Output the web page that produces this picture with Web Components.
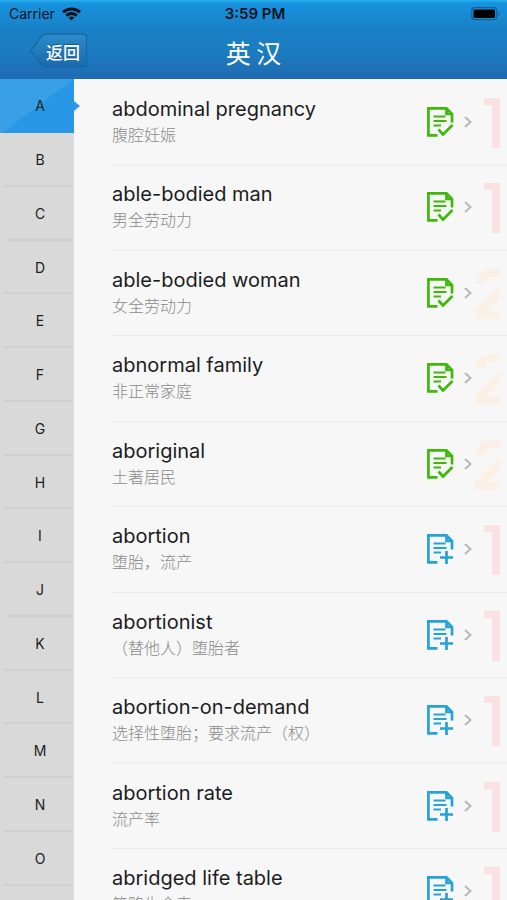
<!DOCTYPE html>
<html lang="zh-CN">
<head>
<meta charset="utf-8">
<meta name="viewport" content="width=device-width, initial-scale=1">
<title>英汉</title>
<style>
html, body { margin: 0; height: 100%; }
body { font-family: Inter, "Noto Sans CJK SC", sans-serif; color: #1c1c1e; background: #f7f7f7; overflow: hidden; }
</style>
</head>
<body>
<dict-app></dict-app>
<script>
const define = (name, html, init) => {
  customElements.define(name, class extends HTMLElement {
    connectedCallback() {
      if (this.shadowRoot) return;
      const root = this.attachShadow({ mode: 'open' });
      root.innerHTML = html;
      if (init) init(this, root);
    }
  });
};

define('status-bar', `
<style>
:host { display: grid; grid-template-columns: 1fr auto 1fr; align-items: center; height: 28px; padding: 0 6px 0 9px; color: #06131f; font-size: 14px; line-height: 20px; }
.left { display: flex; align-items: center; gap: 7px; }
.time { font-weight: 600; font-size: 15px; }
.battery { justify-self: end; }
svg { display: block; }
</style>
<span class="left"><span>Carrier</span>
<svg width="19" height="14" viewBox="0 0 19 14" fill="none" stroke="currentColor" stroke-width="3"><path d="M1 5.200C5.800.8 13.200.8 18 5.200"/><path d="M4.200 8.600C7.200 5.900 11.800 5.900 14.800 8.600"/><path d="M9.500 13.500L6.500 10.500C8.200 9.100 10.800 9.100 12.500 10.500Z" fill="currentColor" stroke="none"/></svg></span>
<span class="time">3:59 PM</span>
<svg class="battery" width="30" height="14" viewBox="0 0 30 14"><rect x=".7" y=".7" width="25" height="12" rx="3.500" fill="none" stroke="#155f92" stroke-width="1.200"/><rect x="2.500" y="2.500" width="21.500" height="8.500" rx="1.500" fill="#000"/><path d="M27.300 4.500q2.500 2.200 0 4.500z" fill="#155f92"/></svg>`);

define('back-button', `
<style>
:host { display: block; }
button { position: relative; display: block; width: 60px; height: 38px; margin: 0; padding: 0 0 0 8px; border: 0; background: none; color: #fff; font: 500 17px/36px "Noto Sans CJK SC", sans-serif; text-shadow: 0 -1px 1px #14548a; }
svg { position: absolute; inset: 0; }
span { position: relative; }
</style>
<button type="button"><svg width="60" height="38" viewBox="0 0 60 38"><defs><linearGradient id="g" x2="0" y2="1"><stop stop-color="#2d8bca"/><stop offset="1" stop-color="#1a6aac"/></linearGradient></defs><path d="M1.500 18L13 3Q15 1 18 1H54Q57.500 1 57.500 5V30Q57.500 34 54 34H18Q15 34 13 32Z" fill="url(#g)" stroke="#1a67a5" stroke-width="1.300"/></svg><span><slot></slot></span></button>`);

define('nav-bar', `
<style>
:host { display: block; height: 79px; background: linear-gradient(#27b2ee 0, #1793df 3px, #1a80c6 30px, #1c7dc1 50px, #1e6bb2 100%); }
.bar { display: grid; grid-template-columns: 1fr auto 1fr; align-items: center; height: 48px; padding: 0 29px; }
h1 { margin: 0; color: #fff; font: 400 25px/36px "Noto Sans CJK SC", sans-serif; }
</style>
<status-bar></status-bar>
<div class="bar"><back-button>返回</back-button><h1><slot></slot></h1></div>`);

define('index-letter', `
<style>
:host { display: block; height: 54px; }
:host(:nth-child(4n)) { height: 53px; }
button { position: relative; display: block; width: 100%; height: 100%; margin: 0; padding: 0 0 0 6px; border: 0; background: none; color: #1c1c1e; font: 400 14px/20px Inter, sans-serif; }
button::after { content: ""; position: absolute; left: 4px; right: 2px; bottom: 0; border-bottom: 2px solid #d0d0d0; }
:host([current]) button { background: linear-gradient(143deg, #39a0e8 50%, #2898e6 51%); }
:host([current]) button::after { left: 100%; right: auto; top: 22px; bottom: auto; border: solid transparent; border-width: 5px 0 5px 6px; border-left-color: #2f9ae6; }
</style>
<button type="button"><slot></slot></button>`);

const paper = '<path d="M10.500 28.300H1.400V1.400H19.500L25 7V15.500M19.500 1.500V7H25"/><path d="M6.500 9.500H18.500M6.500 14H19.500M6.500 18.500H14" stroke-width="2.200"/>';
const numerals = {
  1: '<path d="M9 0H25V50H17V7H9Z"/>',
  2: '<path d="M1 14C2 6 7 0 15 0H25V8H17C12 8 10 11 9 16ZM25 17V29L13 42H25V50H0V41L19 23Q23 19 25 17Z"/>'
};
define('word-row', `
<style>
:host { display: block; height: 85px; padding: 0 0 0 38px; }
:host(:nth-child(even)) { height: 86px; }
a { display: flex; height: 100%; padding-right: 7px; border-bottom: 1px solid #ededed; box-sizing: border-box; color: inherit; text-decoration: none; overflow: hidden; }
.text { flex: 1; min-width: 0; padding-top: 16px; white-space: nowrap; }
.word { font-size: 20px; line-height: 26px; }
.meaning { color: #8a8a8a; font: 300 16px/24px "Noto Sans CJK SC", sans-serif; }
.icon { width: 27px; height: 30px; margin-top: 27px; fill: none; stroke: #23a3d8; stroke-width: 2.700; }
:host([saved]) .icon { stroke: #3eb90b; }
.chevron { width: 8px; height: 12px; margin: 36px 3px 0 10px; fill: none; stroke: #b9b9b9; stroke-width: 2.200; }
.level { width: 25px; height: 50px; margin-top: 18px; fill: #fbe2e2; }
:host([level="2"]) .level { fill: #faf0e6; }
</style>
<a href="#"><div class="text"><div class="word"></div><div class="meaning"></div></div>
<svg class="icon" viewBox="0 0 27 30"></svg>
<svg class="chevron" viewBox="0 0 8 12"><path d="M1 1L6.500 6L1 11"/></svg>
<svg class="level" viewBox="0 0 25 50"></svg></a>`, (el, root) => {
  root.querySelector('.word').textContent = el.getAttribute('word');
  root.querySelector('.meaning').textContent = el.getAttribute('meaning');
  root.querySelector('.level').innerHTML = numerals[el.getAttribute('level')];
  root.querySelector('.icon').innerHTML = paper + (el.hasAttribute('saved')
    ? '<path d="M11.500 22.500L16 27.500L25.500 18"/>'
    : '<path d="M19.500 17V30M13 23.500H26"/>');
});

const words = [
  ['abdominal pregnancy', '腹腔妊娠', 1, 1], ['able-bodied man', '男全劳动力', 1, 1],
  ['able-bodied woman', '女全劳动力', 2, 1], ['abnormal family', '非正常家庭', 2, 1],
  ['aboriginal', '土著居民', 2, 1], ['abortion', '堕胎，流产', 1, 0],
  ['abortionist', '（替他人）堕胎者', 1, 0], ['abortion-on-demand', '选择性堕胎；要求流产（权）', 1, 0],
  ['abortion rate', '流产率', 1, 0], ['abridged life table', '简略生命表', 1, 0]
];
define('dict-app', `
<style>
:host { display: flex; flex-direction: column; height: 100vh; overflow: hidden; }
nav-bar { flex: none; }
.body { display: flex; flex: 1; min-height: 0; }
nav { flex: none; width: 74px; background: #d9d9d9; }
main { flex: 1; min-width: 0; padding-top: 1px; overflow: hidden; }
word-row { box-sizing: border-box; }
</style>
<nav-bar>英 汉</nav-bar>
<div class="body">
<nav aria-label="索引">${[...'ABCDEFGHIJKLMNO'].map((c, i) => `<index-letter${i ? '' : ' current'}>${c}</index-letter>`).join('')}</nav>
<main>${words.map(([w, m, l, s]) => `<word-row word="${w}" meaning="${m}" level="${l}"${s ? ' saved' : ''}></word-row>`).join('')}</main>
</div>`);
</script>
</body>
</html>
